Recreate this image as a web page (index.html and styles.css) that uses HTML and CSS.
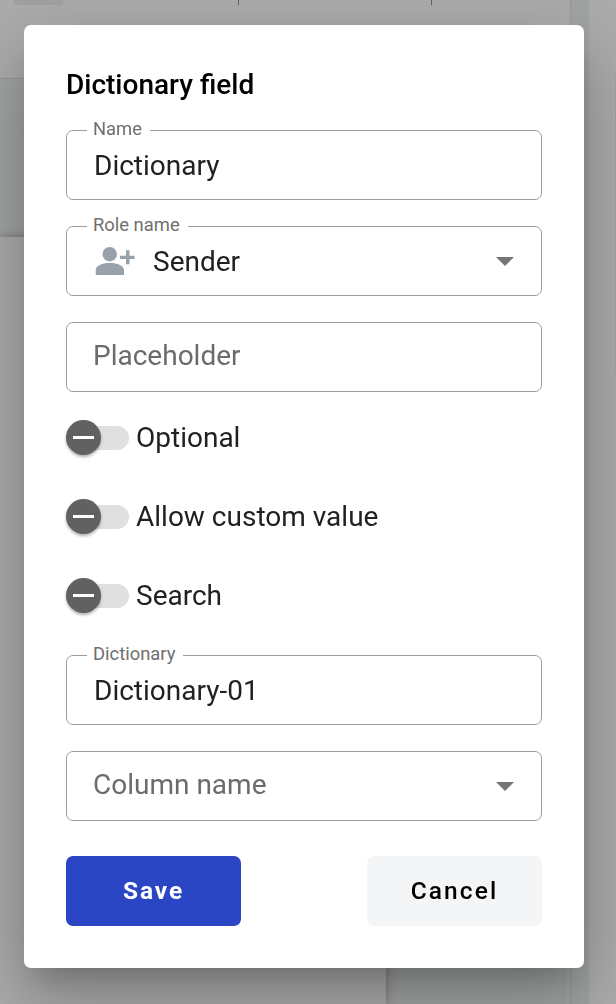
FILE: index.html
```html
<!DOCTYPE html>
<html lang="en">
<head>
<meta charset="utf-8">
<title>Dictionary field</title>
<link rel="stylesheet" href="styles.css">
</head>
<body>
<div class="workspace">
  <div class="editor">
    <div class="toolbar"><span class="chip"></span><span class="tick tick-first"></span><span class="tick"></span></div>
    <div class="canvas"><div class="sheet"></div></div>
  </div>
  <div class="scroll-strip"></div>
  <div class="side-panel"><div class="side-card"></div></div>
</div>
<div class="overlay">
  <form class="dialog" role="dialog" aria-labelledby="dialog-title">
    <h1 class="title" id="dialog-title">Dictionary field</h1>
    <div class="field">
      <span class="label">Name</span>
      <span class="value">Dictionary</span>
    </div>
    <div class="field">
      <span class="label">Role name</span>
      <svg class="person" viewBox="0 0 40 30" width="40" height="30"><circle cx="14.7" cy="8.2" r="7.2"/><path d="M.7 29V24.5C.7 19.500 7 17 14.800 17S29 19.500 29 24.500V29zM31 4.300h3.500v5.500H39.500v3.300H34.500V18.300H31V13.100H25V9.800h6z"/></svg>
      <span class="value">Sender</span>
      <svg class="arrow" viewBox="0 0 18 9" width="18" height="9"><path d="M0 0h18L9 9z"/></svg>
    </div>
    <div class="field">
      <span class="placeholder">Placeholder</span>
    </div>
    <div class="toggles">
      <div class="toggle"><span class="track"><span class="knob"></span></span><span class="caption">Optional</span></div>
      <div class="toggle"><span class="track"><span class="knob"></span></span><span class="caption">Allow custom value</span></div>
      <div class="toggle"><span class="track"><span class="knob"></span></span><span class="caption">Search</span></div>
    </div>
    <div class="field">
      <span class="label">Dictionary</span>
      <span class="value">Dictionary-01</span>
    </div>
    <div class="field">
      <span class="placeholder">Column name</span>
      <svg class="arrow" viewBox="0 0 18 9" width="18" height="9"><path d="M0 0h18L9 9z"/></svg>
    </div>
    <div class="actions">
      <button class="button save" type="button">Save</button>
      <button class="button cancel" type="button">Cancel</button>
    </div>
  </form>
</div>
</body>
</html>
```
FILE: styles.css
```css
* { box-sizing: border-box; }
body {
  margin: 0;
  height: 1004px;
  overflow: hidden;
  font-family: Roboto, sans-serif;
  color: #212121;
  background: #adadad;
}
.workspace { display: flex; height: 1004px; }
.editor { width: 570px; display: flex; flex-direction: column; }
.toolbar {
  display: flex;
  align-items: flex-start;
  height: 79px;
  padding-left: 14px;
  border-bottom: 1px solid #989898;
}
.chip { width: 49px; height: 5px; background: #a3a3a3; }
.tick { width: 1px; height: 5px; margin-left: 192px; background: #62626a; }
.tick-first { margin-left: 175px; }
.canvas {
  flex: 1;
  padding-top: 158px;
  background: linear-gradient(90deg, transparent 563px, #9d9f9f 563px, #9d9f9f 564px, transparent 564px) #a3a6a5;
}
.sheet { width: 386px; height: 767px; background: #adadad; box-shadow: 0 0 9px rgba(0, 0, 0, .3); }
.scroll-strip { width: 19px; border-left: 1px solid #989a9a; background: #a2a5a5; }
.side-panel { flex: 1; padding: 75px 0 0 26px; background: #adadad; }
.side-card { height: 300px; background: #a3a5a4; }

.overlay { position: fixed; inset: 0; padding: 25px 0 0 24px; }
.dialog {
  width: 560px;
  height: 943px;
  padding: 42px;
  border-radius: 7px;
  background: #fff;
  box-shadow: 0 19px 26px -12px rgba(0, 0, 0, .2), 0 42px 67px 5px rgba(0, 0, 0, .14), 0 16px 81px 14px rgba(0, 0, 0, .12);
}
.title {
  margin: 0 0 28px;
  font-size: 28px;
  line-height: 35px;
  font-weight: 500;
  color: #000;
}
.field {
  position: relative;
  display: flex;
  align-items: center;
  height: 70px;
  margin-bottom: 26px;
  padding: 0 27px 0 26px;
  border: 1px solid #9e9e9e;
  border-radius: 7px;
}
.label {
  position: absolute;
  top: -14px;
  left: 20px;
  padding: 0 8px 0 6px;
  background: #fff;
  font-size: 18.4px;
  line-height: 24px;
  color: #6f6f6f;
}
.value { margin-left: 1px; padding-top: 2px; font-size: 28px; line-height: 40px; }
.placeholder { padding-bottom: 3px; font-size: 28px; line-height: 40px; color: #6b6b6b; }
.person { margin: 0 17px 0 2px; fill: #98a0aa; }
.arrow { margin-left: auto; fill: #757575; }

.toggles { display: grid; gap: 44px; margin: 28px 0 42px; }
.toggle { display: flex; align-items: center; height: 35px; }
.track {
  display: flex;
  align-items: center;
  width: 63px;
  height: 24px;
  border-radius: 12px;
  background: #e0e0e0;
}
.knob {
  display: grid;
  place-items: center;
  width: 35px;
  height: 35px;
  flex-shrink: 0;
  border-radius: 50%;
  background: #616161;
  box-shadow: 0 2px 3px rgba(0, 0, 0, .3);
}
.knob::before { content: ""; width: 21px; height: 3px; background: #fff; }
.caption { margin-left: 7px; font-size: 28px; line-height: 35px; }

.actions { display: flex; justify-content: space-between; margin-top: 35px; }
.button {
  width: 175px;
  height: 70px;
  padding: 0 0 2px;
  border: 0;
  border-radius: 7px;
  font: 500 24.500px Roboto, sans-serif;
  letter-spacing: 2.100px;
}
.save { background: #2b46c5; color: #fff; font-weight: 700; letter-spacing: 1.900px; }
.cancel { background: #f3f5f7; color: #000; }
```
